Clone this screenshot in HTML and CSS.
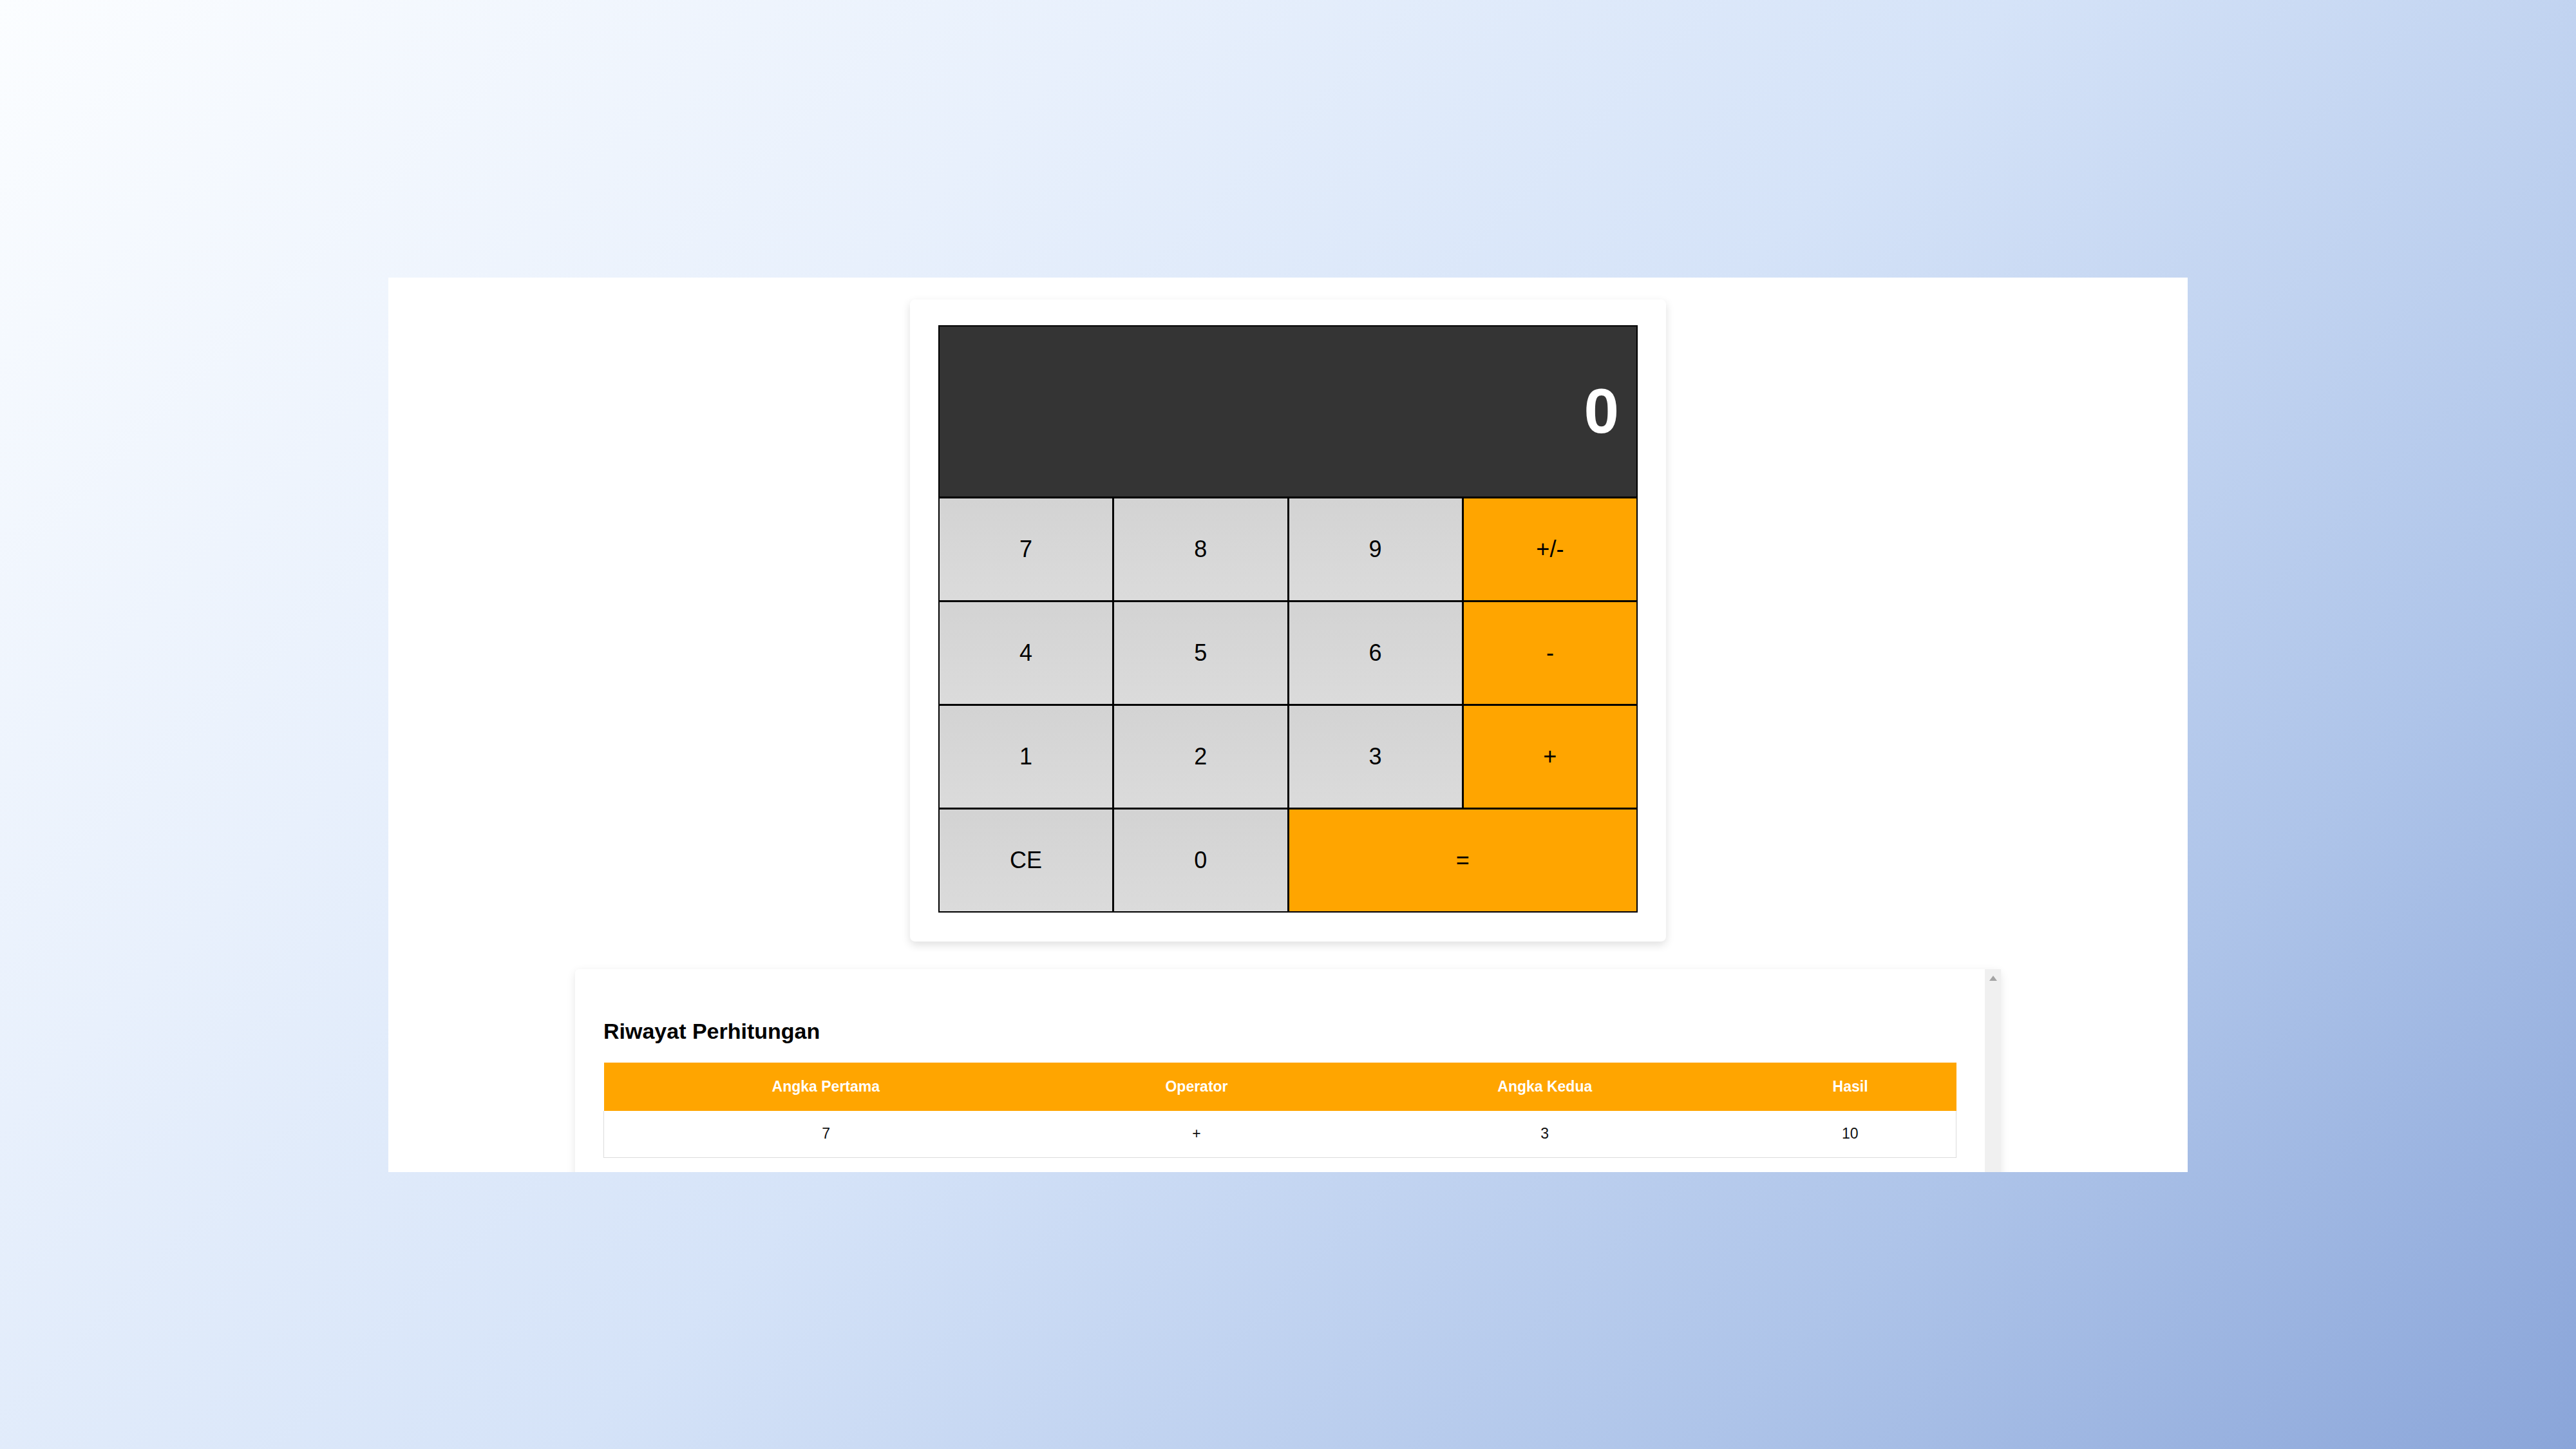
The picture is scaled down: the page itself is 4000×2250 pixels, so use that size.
FILE: index.html
```html
<!DOCTYPE html>
<html lang="id">
<head>
<meta charset="utf-8">
<title>Kalkulator</title>
<link rel="stylesheet" href="styles.css">
</head>
<body>
<div class="viewport">
  <div class="calc-card">
    <div class="calc">
      <div class="display">0</div>
      <button class="key">7</button>
      <button class="key">8</button>
      <button class="key">9</button>
      <button class="key op">+/-</button>
      <button class="key">4</button>
      <button class="key">5</button>
      <button class="key">6</button>
      <button class="key op">-</button>
      <button class="key">1</button>
      <button class="key">2</button>
      <button class="key">3</button>
      <button class="key op">+</button>
      <button class="key">CE</button>
      <button class="key">0</button>
      <button class="key op wide">=</button>
    </div>
  </div>
  <div class="history-card">
    <div class="history-content">
      <h2 class="history-title">Riwayat Perhitungan</h2>
      <table class="history-table">
        <colgroup>
          <col class="c1"><col class="c2"><col class="c3"><col class="c4">
        </colgroup>
        <thead>
          <tr><th>Angka Pertama</th><th>Operator</th><th>Angka Kedua</th><th>Hasil</th></tr>
        </thead>
        <tbody>
          <tr><td>7</td><td>+</td><td>3</td><td>10</td></tr>
        </tbody>
      </table>
    </div>
    <div class="scrollbar">
      <svg class="scroll-arrow" width="12" height="8" viewBox="0 0 12 8"><path d="M6 0 L12 8 L0 8 Z" fill="#a3a3a3"/></svg>
    </div>
  </div>
</div>
</body>
</html>
```
FILE: styles.css
```css
html, body {
  margin: 0;
  padding: 0;
}
body {
  width: 4000px;
  height: 2250px;
  display: flex;
  align-items: center;
  justify-content: center;
  background: linear-gradient(135deg, #fbfdff 0%, #e8f0fc 28%, #d5e3f8 50%, #aec4e9 78%, #8aa5d9 100%);
  font-family: "Liberation Sans", Arial, sans-serif;
}
.viewport {
  width: 2794px;
  height: 1389px;
  background: #ffffff;
  overflow: hidden;
  display: flex;
  flex-direction: column;
  align-items: center;
  padding-top: 34px;
  box-sizing: border-box;
  gap: 43px;
}
.calc-card {
  width: 1174px;
  box-sizing: border-box;
  padding: 40px 44px 45px;
  background: #fff;
  border-radius: 8px;
  box-shadow: 0 5px 14px rgba(0, 0, 0, 0.13);
  flex: none;
}
.calc {
  display: grid;
  grid-template-columns: repeat(4, 1fr);
  grid-template-rows: 264px repeat(4, 158px);
  gap: 3px;
  background: #000;
  border: 2px solid #000;
}
.display {
  grid-column: 1 / 5;
  background: #343434;
  color: #fff;
  font-weight: bold;
  font-size: 98px;
  display: flex;
  align-items: center;
  justify-content: flex-end;
  padding-right: 27px;
}
.key {
  border: 0;
  margin: 0;
  padding: 0;
  font-family: "Liberation Sans", Arial, sans-serif;
  font-size: 36px;
  color: #000;
  background: linear-gradient(#d3d3d3, #dbdbdb);
  display: flex;
  align-items: center;
  justify-content: center;
}
.key.op {
  background: #ffa500;
}
.key.wide {
  grid-column: span 2;
}
.history-card {
  width: 2214px;
  flex: none;
  display: flex;
  background: #fff;
  border-radius: 6px 6px 0 0;
  box-shadow: 0 4px 14px rgba(0, 0, 0, 0.1);
  height: 500px;
}
.history-content {
  flex: 1;
  padding: 44px 44px 0;
}
.history-title {
  margin: 32px 0 29px;
  font-size: 34px;
  line-height: 40px;
  font-weight: bold;
  color: #000;
}
.history-table {
  width: 100%;
  table-layout: fixed;
  border-collapse: collapse;
}
.c1 { width: 32.84%; }
.c2 { width: 21.99%; }
.c3 { width: 29.51%; }
.c4 { width: 15.66%; }
.history-table th {
  background: #ffa500;
  color: #fff;
  font-size: 23px;
  font-weight: bold;
  height: 75px;
  padding: 0;
  text-align: center;
}
.history-table td {
  height: 72px;
  padding: 0;
  font-size: 23px;
  color: #111;
  text-align: center;
  border-bottom: 1px solid #dcdcdc;
}
.history-table tbody tr {
  border-left: 1px solid #dcdcdc;
  border-right: 1px solid #dcdcdc;
}
.scrollbar {
  width: 25px;
  flex: none;
  background: #f0f0f0;
  display: flex;
  justify-content: center;
  padding-top: 10px;
  box-sizing: border-box;
}
.scroll-arrow {
  display: block;
  width: 12px;
  height: 8px;
}
```
